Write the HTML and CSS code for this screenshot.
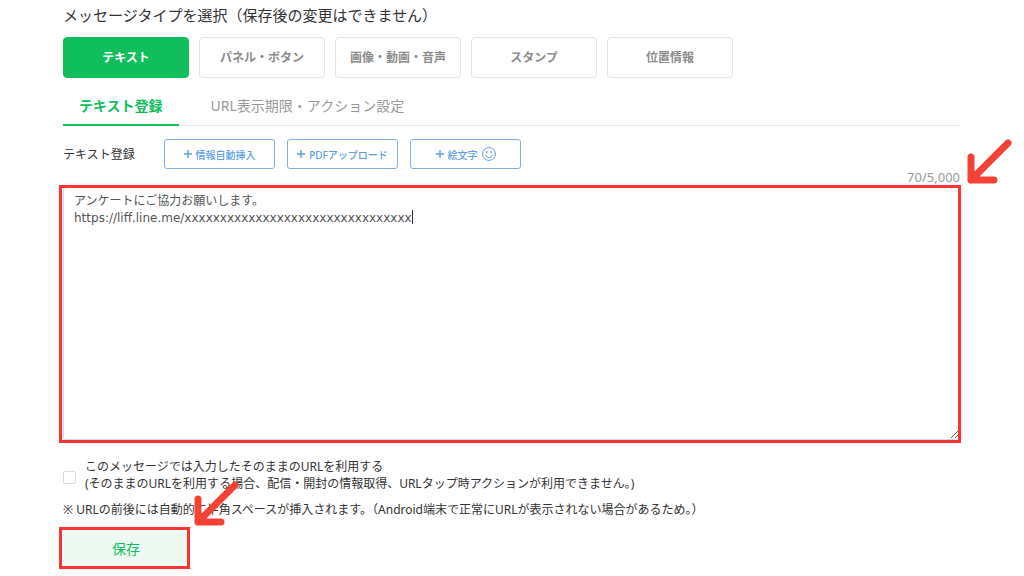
FILE: index.html
```html
<!DOCTYPE html>
<html lang="ja">
<head>
  <meta charset="UTF-8" />
  <meta name="viewport" content="width=device-width, initial-scale=1.0"/>
  <title>メッセージ登録</title>
  <link rel="stylesheet" href="styles.css">
</head>
<body>

  <main class="page">
    <h1 class="title">メッセージタイプを選択（保存後の変更はできません）</h1>

    <div class="types">
      <button type="button" class="type active">テキスト</button>
      <button type="button" class="type">パネル・ボタン</button>
      <button type="button" class="type">画像・動画・音声</button>
      <button type="button" class="type">スタンプ</button>
      <button type="button" class="type">位置情報</button>
    </div>

    <nav class="tabs">
      <a href="#text" class="tab active">テキスト登録</a>
      <a href="#url" class="tab">URL表示期限・アクション設定</a>
    </nav>

    <form>
      <div class="tools">
        <label for="message" class="tools-label">テキスト登録</label>
        <button type="button" class="tool">
          <svg class="plus" viewBox="0 0 8 8"><path d="M4 0v8M0 4h8"/></svg>
          情報自動挿入
        </button>
        <button type="button" class="tool">
          <svg class="plus" viewBox="0 0 8 8"><path d="M4 0v8M0 4h8"/></svg>
          PDFアップロード
        </button>
        <button type="button" class="tool">
          <svg class="plus" viewBox="0 0 8 8"><path d="M4 0v8M0 4h8"/></svg>
          絵文字
          <svg class="smile" viewBox="0 0 14 14">
            <circle cx="7" cy="7" r="6.4"/>
            <path d="M3.8 8.3c.6 1.6 1.7 2.4 3.2 2.4s2.6-.8 3.2-2.4"/>
            <path d="M4.8 4.6v1.2M9.2 4.6v1.2" stroke-width="1.3"/>
          </svg>
        </button>
      </div>

      <p class="counter">70/5,000</p>

      <div class="editor marked">
        <textarea id="message" class="message" spellcheck="false">アンケートにご協力お願いします。
https://liff.line.me/xxxxxxxxxxxxxxxxxxxxxxxxxxxxxxxx</textarea>
        <span class="caret"></span>
        <svg class="arrow arrow-editor" viewBox="0 0 46 46"><path d="M42 4L5 41M5 18v23h23"/></svg>
      </div>

      <div class="option">
        <input type="checkbox" id="rawUrl" class="check">
        <label for="rawUrl">このメッセージでは入力したそのままのURLを利用する<br>(そのままのURLを利用する場合、配信・開封の情報取得、URLタップ時アクションが利用できません｡)</label>
      </div>

      <p class="note">※ URLの前後には自動的に半角スペースが挿入されます。（Android端末で正常にURLが表示されない場合があるため。）</p>

      <div class="save-area marked">
        <button type="submit" class="save">保存</button>
        <svg class="arrow arrow-save" viewBox="0 0 46 46"><path d="M42 4L5 41M5 18v23h23"/></svg>
      </div>
    </form>
  </main>

</body>
</html>
```

FILE: styles.css
```css
* {
  box-sizing: border-box;
}

body {
  margin: 0;
  background: #fff;
  color: #333;
  font-family: 'Noto Sans', 'Noto Sans CJK JP', sans-serif;
  font-size: 12px;
  line-height: 17px;
}

button,
textarea {
  font-family: inherit;
}

button {
  cursor: pointer;
}

.page {
  padding: 3px 64px 8px 63px;
}

.title {
  margin: 0 0 10px;
  font-size: 15px;
  font-weight: 400;
  line-height: 24px;
}

.types {
  display: flex;
  gap: 10px;
}

.type {
  width: 126px;
  height: 41px;
  padding: 0 0 2px;
  border: 1px solid #e6e1e4;
  border-radius: 4px;
  background: #fff;
  color: #8c8c8c;
  font-size: 12px;
  font-weight: 700;
}

.type.active {
  border-color: #10bf5c;
  background: #10bf5c;
  color: #fff;
}

.tabs {
  display: flex;
  gap: 16px;
  margin-top: 10px;
  border-bottom: 1px solid #e9e9e9;
}

.tab {
  margin-bottom: -1px;
  padding: 6px 16px;
  border-bottom: 2px solid transparent;
  color: #999;
  font-size: 14px;
  line-height: 24px;
  text-decoration: none;
}

.tab.active {
  border-color: #10bf5c;
  color: #10bf5c;
  font-weight: 700;
}

.tools {
  display: flex;
  align-items: center;
  gap: 12px;
  margin-top: 13px;
}

.tools-label {
  width: 89px;
}

.tool {
  display: flex;
  align-items: center;
  justify-content: center;
  gap: 4px;
  width: 111px;
  height: 30px;
  padding: 0;
  border: 1px solid #7fb1e8;
  border-radius: 3px;
  background: #fff;
  color: #5c9fe3;
  font-size: 10px;
  font-weight: 500;
}

.plus {
  width: 8px;
  height: 8px;
  fill: none;
  stroke: currentColor;
  stroke-width: 1.4;
}

.smile {
  width: 14px;
  height: 14px;
  fill: none;
  stroke: currentColor;
  stroke-linecap: round;
}

.counter {
  margin: 0;
  padding-bottom: 2px;
  color: #999;
  font-size: 13px;
  line-height: 16px;
  text-align: right;
}

/* red guide frame around the parts to be filled in */
.marked {
  position: relative;
}

.marked::after {
  content: '';
  position: absolute;
  inset: -2px -1px -3px -4px;
  border: 3px solid #fd3232;
  pointer-events: none;
}

.message {
  display: block;
  width: 100%;
  height: 253px;
  padding: 5px 10px;
  border: 1px solid #c9dcec;
  border-radius: 3px;
  outline: none;
  box-shadow: 0 0 7px 1px #d5e8f8;
  color: #555;
  font-family: 'DejaVu Sans', 'Noto Sans CJK JP', sans-serif;
  font-size: 12px;
  line-height: 17px;
}

.caret {
  position: absolute;
  top: 23px;
  left: 349px;
  width: 1px;
  height: 14px;
  background: #333;
  pointer-events: none;
}

.message:focus + .caret {
  display: none;
}

.arrow {
  position: absolute;
  z-index: 1;
  width: 46px;
  height: 46px;
  fill: none;
  stroke: #f44336;
  stroke-width: 7;
  stroke-linecap: round;
  stroke-linejoin: round;
  pointer-events: none;
}

.arrow-editor {
  top: -48px;
  right: -52px;
}

.arrow-save {
  top: -48px;
  left: 130px;
}

.option {
  display: flex;
  align-items: center;
  gap: 9px;
  margin-top: 18px;
}

.check {
  flex: none;
  appearance: none;
  width: 13px;
  height: 13px;
  margin: 5px 0 0;
  border: 1px solid #dcdcdc;
  border-radius: 2px;
  background: #fff;
}

.check:checked {
  background: #10bf5c;
}

.note {
  margin: 9px 0 11px;
}

.save-area {
  width: 126px;
}

.save {
  display: block;
  width: 100%;
  height: 37px;
  border: 0;
  background: #eef9f3;
  color: #10bf5c;
  font-size: 14px;
}
```
